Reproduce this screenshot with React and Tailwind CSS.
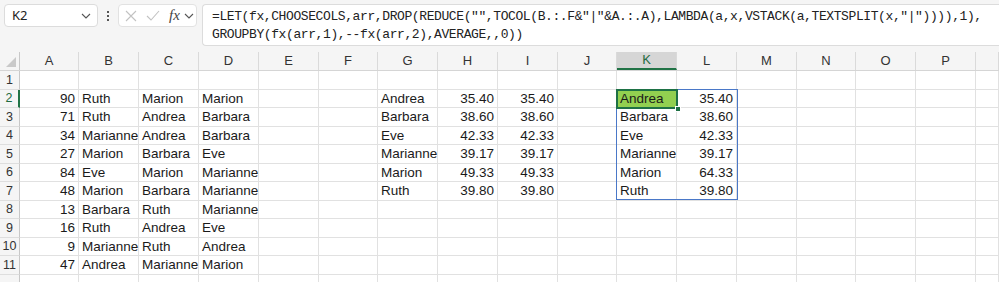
const colWidths = [59, 60, 60, 60, 60, 59, 60, 60, 60, 59, 60, 60, 60, 59, 60, 60];
const letters = ["A", "B", "C", "D", "E", "F", "G", "H", "I", "J", "K", "L", "M", "N", "O", "P", ""];
const rowHeights = [19, 18, 19, 18, 19, 18, 19, 18, 19, 18, 19, 18];

const rows = {
  2: { A: "90", B: "Ruth", C: "Marion", D: "Marion", G: "Andrea", H: "35.40", I: "35.40", K: "Andrea", L: "35.40" },
  3: { A: "71", B: "Ruth", C: "Andrea", D: "Barbara", G: "Barbara", H: "38.60", I: "38.60", K: "Barbara", L: "38.60" },
  4: { A: "34", B: "Marianne", C: "Andrea", D: "Barbara", G: "Eve", H: "42.33", I: "42.33", K: "Eve", L: "42.33" },
  5: { A: "27", B: "Marion", C: "Barbara", D: "Eve", G: "Marianne", H: "39.17", I: "39.17", K: "Marianne", L: "39.17" },
  6: { A: "84", B: "Eve", C: "Marion", D: "Marianne", G: "Marion", H: "49.33", I: "49.33", K: "Marion", L: "64.33" },
  7: { A: "48", B: "Marion", C: "Barbara", D: "Marianne", G: "Ruth", H: "39.80", I: "39.80", K: "Ruth", L: "39.80" },
  8: { A: "13", B: "Barbara", C: "Ruth", D: "Marianne" },
  9: { A: "16", B: "Ruth", C: "Andrea", D: "Eve" },
  10: { A: "9", B: "Marianne", C: "Ruth", D: "Andrea" },
  11: { A: "47", B: "Andrea", C: "Marianne", D: "Marion" },
};

const numeric = (v) => /^[0-9.]+$/.test(v);

function Chevron({ className }) {
  return (
    <svg width="10" height="6" viewBox="0 0 10 6" className={className}>
      <path d="M1 1l4 4 4-4" fill="none" stroke="#555" strokeWidth="1.1" />
    </svg>
  );
}

function FormulaBar() {
  return (
    <div className="h-[52px] bg-[#f5f5f5] flex items-start pt-[4px] pl-[4px]">
      <div className="w-[94px] shrink-0 h-[23px] bg-white border border-[#dcdcdc] rounded-[4px] flex items-center justify-between pl-[7px] pr-[6px] text-[13px] text-[#222]">
        <span>K2</span>
        <Chevron />
      </div>
      <div className="w-[20px] shrink-0 h-[23px] flex flex-col items-center justify-center gap-[2px]">
        <span className="w-[2px] h-[2px] bg-[#555]" />
        <span className="w-[2px] h-[2px] bg-[#555]" />
        <span className="w-[2px] h-[2px] bg-[#555]" />
      </div>
      <div className="w-[79px] shrink-0 h-[23px] bg-white border border-[#e2e2e2] rounded-[4px] flex items-center pl-[6px] gap-[9px]">
        <svg width="12" height="12" viewBox="0 0 12 12">
          <path d="M1 1l10 10M11 1L1 11" stroke="#c2c2c2" strokeWidth="1.1" />
        </svg>
        <svg width="14" height="11" viewBox="0 0 14 11">
          <path d="M1 6l4 4 8-9" fill="none" stroke="#c2c2c2" strokeWidth="1.1" />
        </svg>
        <span className="italic text-[15px] text-[#444] leading-none" style={{ fontFamily: '"Liberation Serif", serif' }}>
          fx
        </span>
        <Chevron className="-ml-[5px]" />
      </div>
      <div
        className="ml-[5px] flex-1 h-[42px] bg-white border border-[#dcdcdc] rounded-l-[4px] border-r-0 pl-[9px] pt-[3px] text-[13px] tracking-[-0.4px] leading-[18px] text-[#222] whitespace-pre"
        style={{ fontFamily: '"Liberation Mono", monospace' }}
      >
        {'=LET(fx,CHOOSECOLS,arr,DROP(REDUCE("",TOCOL(B.:.F&"|"&A.:.A),LAMBDA(a,x,VSTACK(a,TEXTSPLIT(x,"|")))),1),\nGROUPBY(fx(arr,1),--fx(arr,2),AVERAGE,,0))'}
      </div>
    </div>
  );
}

function Sheet() {
  return (
    <div className="relative" style={{ fontFamily: '"Liberation Sans", Arial, sans-serif' }}>
      <div className="flex h-[19px] bg-[#f5f5f5] border-b border-[#d5d5d5]">
        <div className="w-[20px] shrink-0 border-r border-[#c8c8c8] relative">
          <svg width="10" height="10" viewBox="0 0 10 10" className="absolute right-[3px] bottom-[3px]">
            <path d="M10 0L10 10L0 10Z" fill="#c9c9c9" />
          </svg>
        </div>
        {letters.map((l, i) => (
          <div
            key={i}
            className={`shrink-0 flex items-center justify-center text-[13px] border-r border-[#dadada] ${
              l === "K" ? "bg-[#d6d6d6] border-b-2 border-b-[#217346] text-[#1e6b40]" : "text-[#333]"
            } ${l === "" ? "flex-1" : ""}`}
            style={l === "" ? {} : { width: colWidths[i] }}
          >
            {l}
          </div>
        ))}
      </div>
      {rowHeights.map((h, r) => {
        const n = r + 1;
        const data = rows[n] || {};
        return (
          <div key={n} className="flex" style={{ height: h }}>
            <div
              className={`w-[20px] shrink-0 bg-[#f5f5f5] border-b border-[#dedede] flex items-center justify-center text-[12.5px] ${
                n === 2 ? "border-r-2 border-r-[#217346] text-[#1e6b40]" : "border-r border-r-[#c8c8c8] text-[#333]"
              }`}
            >
              {n < 12 ? n : ""}
            </div>
            {letters.map((l, i) => {
              const v = data[l];
              return (
                <div
                  key={i}
                  className={`shrink-0 border-r border-b border-[#e1e1e1] flex items-center pt-[1px] px-[3px] text-[13.5px] text-[#1a1a1a] whitespace-nowrap ${
                    v && numeric(v) ? "justify-end" : "justify-start"
                  } ${l === "" ? "flex-1" : ""} ${l === "K" && n === 2 ? "bg-[#92d050]" : ""}`}
                  style={l === "" ? {} : { width: colWidths[i] }}
                >
                  {v}
                </div>
              );
            })}
          </div>
        );
      })}
      <div className="absolute left-[616px] top-[37px] w-[122px] h-[111px] border-[1.5px] border-[#4a78c8] pointer-events-none" />
      <div className="absolute left-[616px] top-[37px] w-[62px] h-[20px] border-2 border-[#1e7145] pointer-events-none" />
      <div className="absolute left-[675px] top-[54px] w-[6px] h-[6px] bg-[#1e7145] border border-white pointer-events-none" />
    </div>
  );
}

export default function App() {
  return (
    <div className="w-[999px] h-[282px] overflow-hidden bg-white">
      <FormulaBar />
      <Sheet />
    </div>
  );
}
